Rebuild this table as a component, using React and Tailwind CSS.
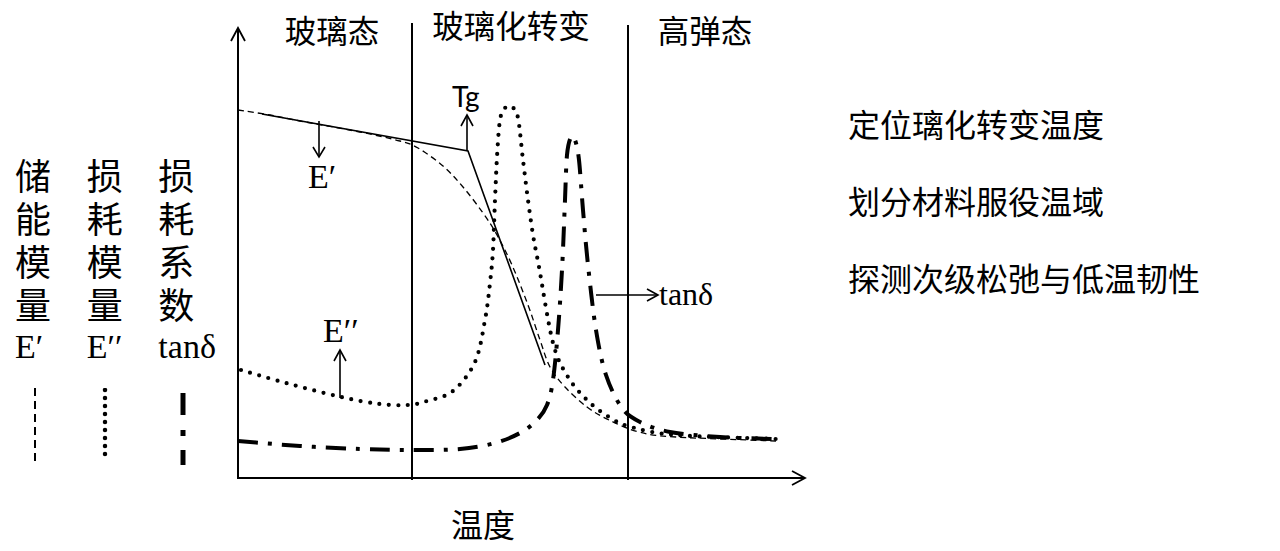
import React from "react";

function smooth(pts) {
  let d = `M${pts[0][0]},${pts[0][1]}`;
  for (let i = 0; i < pts.length - 1; i++) {
    const p0 = pts[i - 1] || pts[i];
    const p1 = pts[i];
    const p2 = pts[i + 1];
    const p3 = pts[i + 2] || p2;
    const c1x = p1[0] + (p2[0] - p0[0]) / 6;
    const c1y = p1[1] + (p2[1] - p0[1]) / 6;
    const c2x = p2[0] - (p3[0] - p1[0]) / 6;
    const c2y = p2[1] - (p3[1] - p1[1]) / 6;
    d += ` C${c1x.toFixed(1)},${c1y.toFixed(1)} ${c2x.toFixed(1)},${c2y.toFixed(1)} ${p2[0]},${p2[1]}`;
  }
  return d;
}

const ePrimeDashed = [
  [238, 110], [270, 115], [300, 121], [360, 132], [400, 141], [418, 148], [443, 166],
  [463, 187], [483, 213], [497, 235], [512, 265], [528, 305], [540, 340], [550, 367],
  [565, 387], [587, 407], [609, 420], [639, 432], [676, 437], [776, 441],
];

const eDouble = [
  [241, 370], [286, 383], [341, 397], [380, 404], [408, 405], [427, 401], [453, 391],
  [475, 362], [485, 320], [490, 283], [493, 250], [495, 200], [497, 157], [500, 120],
  [505, 108], [512, 107], [518, 118], [523, 160], [528, 200], [533, 235], [539, 267],
  [553, 343], [568, 377], [587, 400], [609, 417], [631, 427], [676, 435], [776, 439],
];

const tanDelta = [
  [238, 441], [300, 446], [360, 449], [412, 450], [460, 449], [495, 443], [520, 433],
  [537, 420], [547, 405], [553, 380], [558, 330], [562, 270], [565, 200], [567, 155],
  [571, 137], [575, 140], [579, 160], [583, 210], [588, 265], [596, 330], [606, 375],
  [622, 408], [640, 422], [670, 432], [720, 437], [775, 439],
];

function LegendColumn({ chars, sym, children }) {
  return (
    <div className="flex flex-col w-[72px]">
      <div className="flex flex-col text-[36px] leading-[43px] text-black font-['Noto_Sans_CJK_SC',sans-serif]">
        {chars.map((c, i) => (
          <span key={i} className="h-[43px]">{c}</span>
        ))}
        <span className="h-[43px] font-['Liberation_Serif',serif] text-[34px]">{sym}</span>
      </div>
      <div className="mt-[20px]">{children}</div>
    </div>
  );
}

export default function App() {
  return (
    <div className="flex w-[1280px] h-[551px] bg-white text-black overflow-hidden">
      {/* Left legend */}
      <div className="flex w-[230px] pl-[15px] pt-[153px]">
        <LegendColumn chars={["储", "能", "模", "量"]} sym="E′">
          <svg width="40" height="80">
            <line x1="20" y1="0" x2="20" y2="76" stroke="black" strokeWidth="2" strokeDasharray="8 5" />
          </svg>
        </LegendColumn>
        <LegendColumn chars={["损", "耗", "模", "量"]} sym="E′′">
          <svg width="40" height="80">
            <line x1="18" y1="2" x2="18" y2="74" stroke="black" strokeWidth="4.5" strokeLinecap="round" strokeDasharray="0 8" />
          </svg>
        </LegendColumn>
        <LegendColumn chars={["损", "耗", "系", "数"]} sym="tanδ">
          <svg width="40" height="80">
            <line x1="25" y1="5" x2="25" y2="27" stroke="black" strokeWidth="5" />
            <line x1="25" y1="42" x2="25" y2="48" stroke="black" strokeWidth="5" />
            <line x1="25" y1="62" x2="25" y2="77" stroke="black" strokeWidth="5" />
          </svg>
        </LegendColumn>
      </div>

      {/* Chart */}
      <svg width="590" height="551" viewBox="230 0 590 551" className="shrink-0">
        {/* axes */}
        <line x1="238" y1="28" x2="238" y2="479" stroke="black" strokeWidth="2" />
        <polyline points="231,41 238,28 245,41" fill="none" stroke="black" strokeWidth="1.8" />
        <line x1="237" y1="478" x2="805" y2="478" stroke="black" strokeWidth="2" />
        <polyline points="792,471 805,478 792,485" fill="none" stroke="black" strokeWidth="1.8" />

        {/* region dividers */}
        <line x1="412" y1="23" x2="412" y2="480" stroke="black" strokeWidth="2" />
        <line x1="628" y1="25" x2="628" y2="480" stroke="black" strokeWidth="2" />

        {/* region labels */}
        <g className="font-['Noto_Sans_CJK_SC',sans-serif]" fontSize="31.5" fill="black" textAnchor="middle">
          <text x="332" y="43">玻璃态</text>
          <text x="511" y="38">玻璃化转变</text>
          <text x="705" y="43">高弹态</text>
          <text x="483" y="537" fontSize="32">温度</text>
        </g>

        {/* E' curves */}
        <path d={smooth(ePrimeDashed)} fill="none" stroke="black" strokeWidth="1.3" strokeDasharray="6 4" />
        <polyline points="262,114 468,151 545,365" fill="none" stroke="black" strokeWidth="1.6" />

        {/* E'' dotted */}
        <path d={smooth(eDouble)} fill="none" stroke="black" strokeWidth="4.2" strokeLinecap="round" strokeDasharray="0 9.5" />

        {/* tan delta dash dot */}
        <path d={smooth(tanDelta)} fill="none" stroke="black" strokeWidth="4" strokeDasharray="20 10 4 10" />

        {/* Tg */}
        <text x="452" y="107" fontSize="28" className="font-['Lato','Open_Sans',sans-serif]">Tg</text>
        <line x1="467" y1="151" x2="467" y2="116" stroke="black" strokeWidth="1.6" />
        <polyline points="461,126 467,115 473,126" fill="none" stroke="black" strokeWidth="1.6" />

        {/* E' label */}
        <line x1="319" y1="121" x2="319" y2="157" stroke="black" strokeWidth="1.6" />
        <polyline points="313,147 319,157 325,147" fill="none" stroke="black" strokeWidth="1.6" />
        <text x="308" y="188" fontSize="34" className="font-['Liberation_Serif',serif]">E′</text>

        {/* E'' label */}
        <line x1="340" y1="398" x2="340" y2="351" stroke="black" strokeWidth="1.6" />
        <polyline points="334,361 340,350 346,361" fill="none" stroke="black" strokeWidth="1.6" />
        <text x="323" y="342" fontSize="34" className="font-['Liberation_Serif',serif]">E′′</text>

        {/* tan delta label */}
        <line x1="596" y1="295" x2="657" y2="295" stroke="black" strokeWidth="1.6" />
        <polyline points="647,289 658,295 647,301" fill="none" stroke="black" strokeWidth="1.6" />
        <text x="659" y="305" fontSize="32" className="font-['Liberation_Serif',serif]">tanδ</text>
      </svg>

      {/* Right list */}
      <div className="flex flex-col pl-[28px] pt-[103px] gap-[37px] text-[32px] leading-[40px] font-['Noto_Sans_CJK_SC',sans-serif] whitespace-nowrap">
        <span>定位璃化转变温度</span>
        <span>划分材料服役温域</span>
        <span>探测次级松弛与低温韧性</span>
      </div>
    </div>
  );
}
